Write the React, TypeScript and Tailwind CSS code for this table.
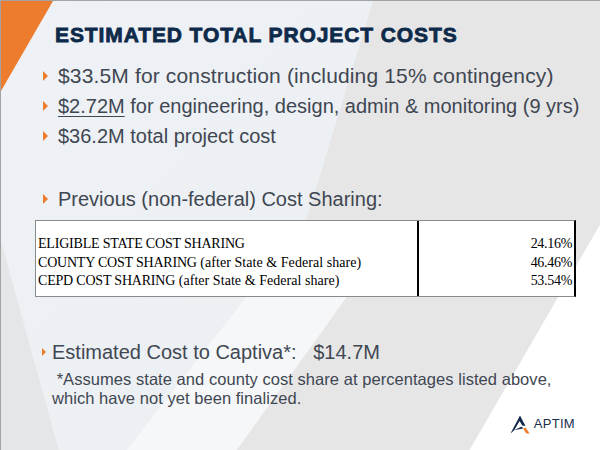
import React from 'react'

const sans = { fontFamily: '"Liberation Sans", Arial, sans-serif' }
const serif = { fontFamily: '"Liberation Serif", "Times New Roman", serif' }

function Arrow({ size = 5 }: { size?: number }) {
  return (
    <svg width={size} height={size * 2} viewBox="0 0 5 10" className="shrink-0">
      <polygon points="0,0 5,5 0,10" fill="#ee7c2e" />
    </svg>
  )
}

function Backdrop() {
  return (
    <svg className="absolute inset-0" width="600" height="450" viewBox="0 0 600 450">
      <defs>
        <linearGradient id="lite" x1="0" y1="0" x2="1" y2="1">
          <stop offset="0" stopColor="#eef1f5" />
          <stop offset="1" stopColor="#eceff2" />
        </linearGradient>
      </defs>
      <rect width="600" height="450" fill="#e6e6e7" />
      <polygon points="0,0 372,0 235,450 0,450" fill="url(#lite)" />
      <polygon points="0,240 0,450 58,450" fill="#e5e6e8" />
      <polygon points="250,290 350,290 235,450 125,450" fill="#f6f7f9" />
      <polygon points="600,222 600,450 468,450" fill="#ffffff" />
      <polygon points="0,0 52,0 0,90" fill="#ee7c2e" />
    </svg>
  )
}

function AptimLogo() {
  return (
    <div className="flex items-center justify-end gap-[3px] mr-[25px] mt-[6px] h-[22px]">
      <svg width="21" height="19" viewBox="0 0 21 19">
        <path d="M0.5 18.5 L10 0.5 L15.5 11 L12.2 10.6 L9.6 6 L4.2 15.2 Z" fill="#13294b" />
        <path d="M4.2 15.2 L11.8 11.6 L13 13.4 Z" fill="#13294b" />
        <polygon points="13,13.6 15.8,12.8 19.5,18.6 16.4,18.6" fill="#ee7c2e" />
      </svg>
      <span className="text-[13px] leading-[16px] tracking-[0.3px] text-[#1b2f4d]" style={sans}>
        APTIM
      </span>
    </div>
  )
}

export default function App() {
  const rows = [
    { label: 'ELIGIBLE STATE COST SHARING', note: '', pct: '24.16%' },
    { label: 'COUNTY COST SHARING', note: '(after State & Federal share)', pct: '46.46%' },
    { label: 'CEPD COST SHARING', note: '(after State & Federal share)', pct: '53.54%' },
  ]

  return (
    <div
      className="relative w-[600px] h-[450px] overflow-hidden border-t border-l border-[#a3a3a3] text-[#3f4752]"
      style={sans}
    >
      <Backdrop />
      <div className="relative flex flex-col pt-[21px]">
        <h1 className="ml-[54px] text-[21px] leading-[26px] font-bold tracking-[0.9px] text-[#0e2a4a] [-webkit-text-stroke:0.8px_#0e2a4a]">
          ESTIMATED TOTAL PROJECT COSTS
        </h1>

        <ul className="mt-[13px] ml-[42px] flex flex-col">
          <li className="flex items-center gap-[10px] h-[30px] text-[21px] tracking-[0.15px] whitespace-nowrap">
            <Arrow />
            <span>$33.5M for construction (including 15% contingency)</span>
          </li>
          <li className="flex items-center gap-[10px] h-[30px] text-[20px] whitespace-nowrap">
            <Arrow />
            <span>
              <span className="underline decoration-1 underline-offset-[3px]">$2.72M</span> for
              engineering, design, admin &amp; monitoring (9 yrs)
            </span>
          </li>
          <li className="flex items-center gap-[10px] h-[30px] text-[20px] whitespace-nowrap">
            <Arrow />
            <span>$36.2M total project cost</span>
          </li>
        </ul>

        <div className="mt-[33px] ml-[42px] flex items-center gap-[10px] h-[30px] text-[20px] whitespace-nowrap">
          <Arrow />
          <span>Previous (non-federal) Cost Sharing:</span>
        </div>

        <div
          className="mt-[6px] ml-[34px] w-[541px] flex bg-white border-y border-l border-[#8a8a8a] border-r-2 border-r-black text-black text-[14px] leading-[18.5px]"
          style={serif}
        >
          <div className="w-[383px] border-r-2 border-black pt-[14px] pb-[5.5px] pl-[2px]">
            {rows.map((r) => (
              <div key={r.pct} className="whitespace-nowrap">
                <span className="tracking-[-0.2px]">{r.label}</span>
                {r.note && <span className="tracking-[0.05px]"> {r.note}</span>}
              </div>
            ))}
          </div>
          <div className="flex-1 pt-[14px] pb-[5.5px] pr-[2px] text-right tracking-[-0.3px]">
            {rows.map((r) => (
              <div key={r.pct}>{r.pct}</div>
            ))}
          </div>
        </div>

        <div className="mt-[42px] ml-[41px] flex items-center gap-[6px] h-[26px] text-[20px] whitespace-pre">
          <Arrow size={4} />
          <span>{'Estimated Cost to Captiva*:   $14.7M'}</span>
        </div>

        <div className="mt-[5px] ml-[51px] text-[16.5px] leading-[18.6px] tracking-[0.05px] whitespace-pre">
          <div>{' *Assumes state and county cost share at percentages listed above,'}</div>
          <div>which have not yet been finalized.</div>
        </div>

        <AptimLogo />
      </div>
    </div>
  )
}
